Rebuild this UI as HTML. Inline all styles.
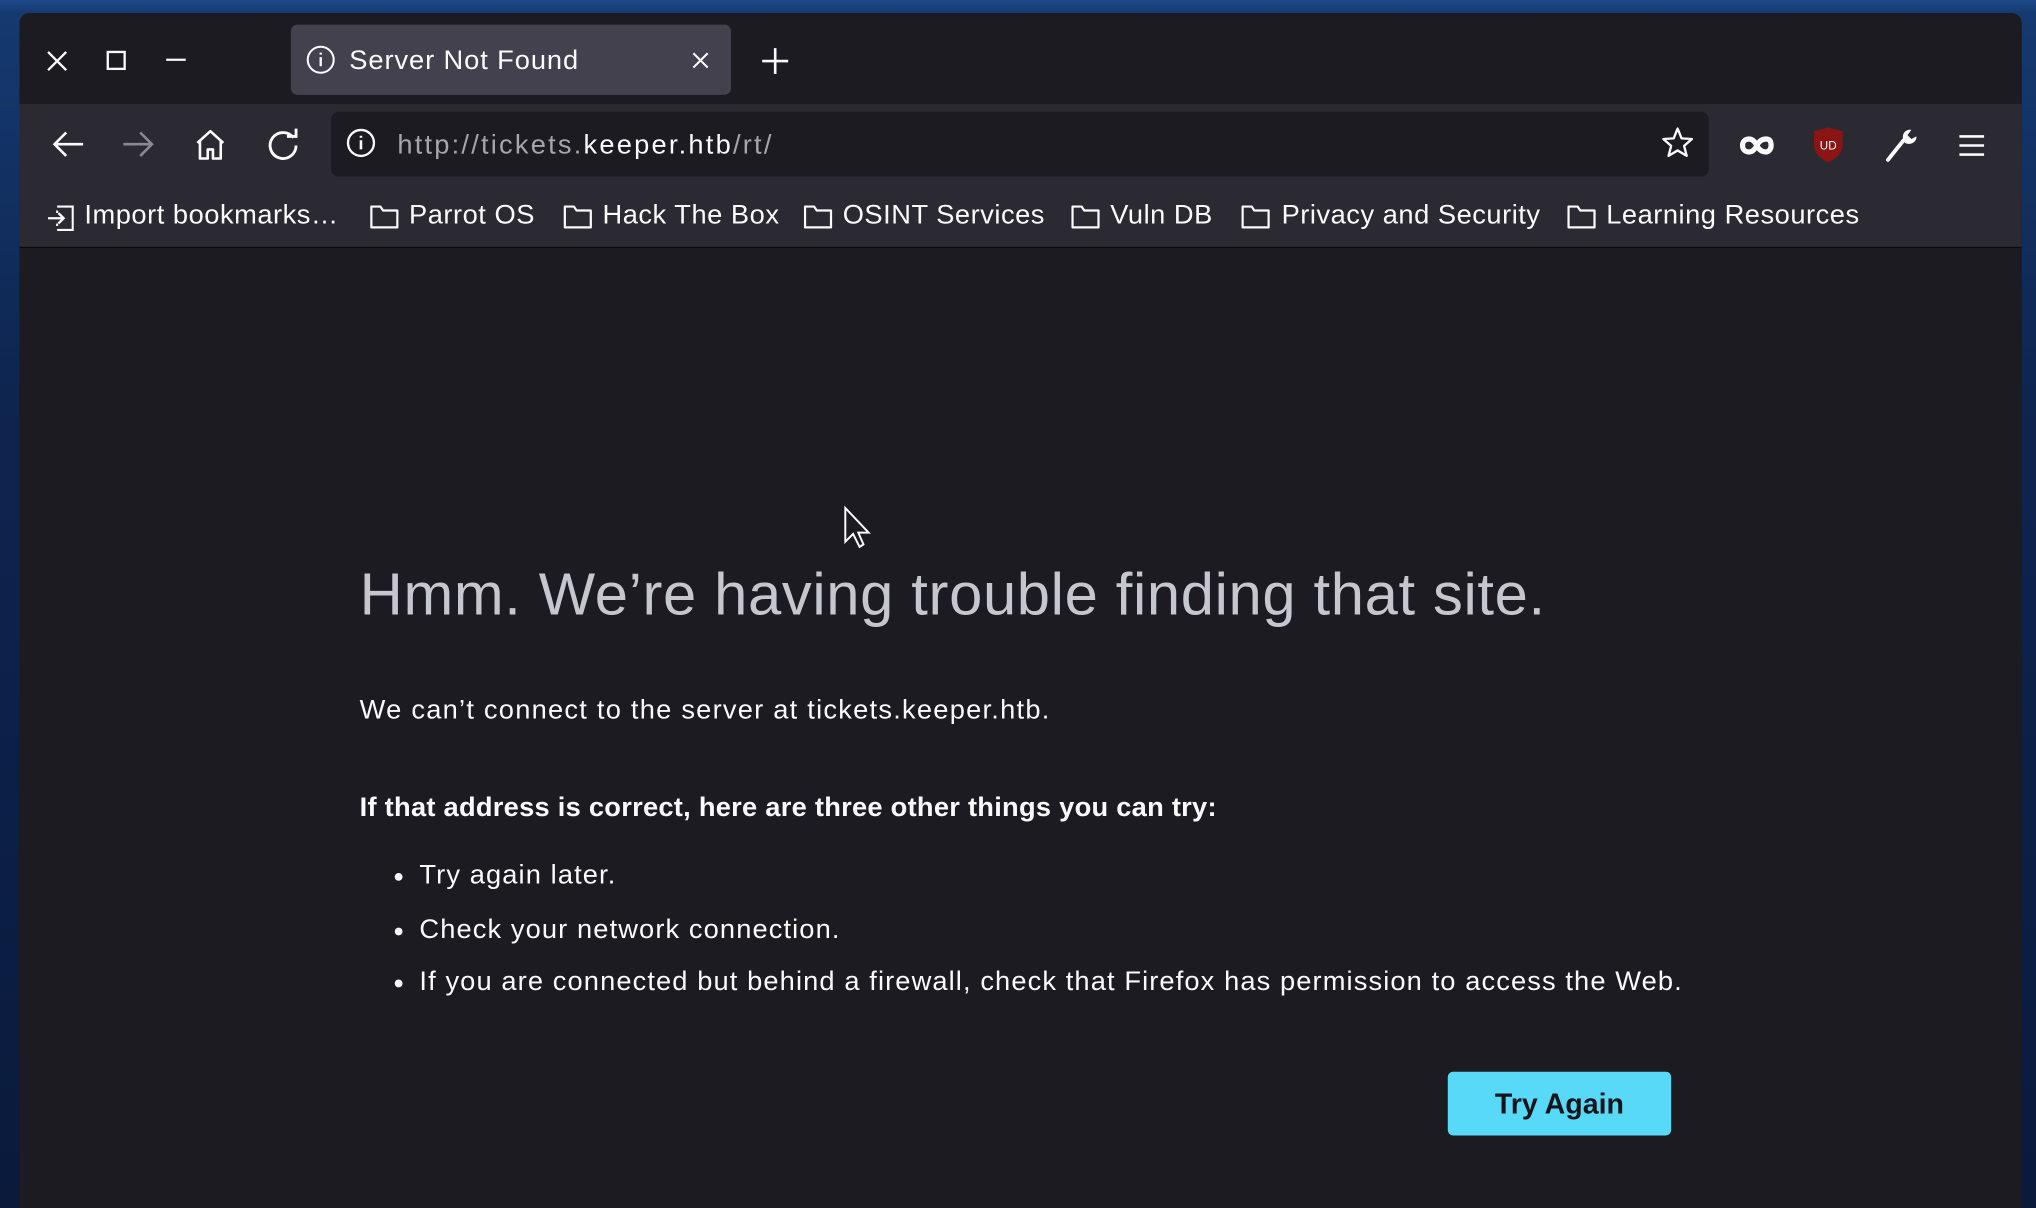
<!DOCTYPE html>
<html><head><meta charset="utf-8"><style>
html,body{margin:0;padding:0;width:2036px;height:1190px;overflow:hidden;background:#0b1a3a;}
#w{position:absolute;left:0;top:0;width:1568px;height:916px;transform:scale(1.29847,1.29913);transform-origin:0 0;
background:linear-gradient(180deg,#1d4a8a 0,#153a70 10px,#0e2550 300px,#0a1a3c 916px);font-family:"Liberation Sans",sans-serif;}
.win{position:absolute;left:15px;top:10px;width:1542px;height:920px;background:#1c1b22;border-radius:8px 8px 0 0;overflow:hidden;}
.tabs{position:absolute;left:0;top:0;width:100%;height:70px;background:#1c1b22;}
.tab{position:absolute;left:209px;top:9px;width:339px;height:54px;background:#42414d;border-radius:5px;}
.tab span{position:absolute;left:45px;top:16px;font-size:21px;color:#fbfbfe;letter-spacing:0.7px;}
.tb{position:absolute;left:0;top:70px;width:100%;height:110px;background:#2b2a33;border-bottom:1px solid #0c0c0f;}
.url{position:absolute;left:240px;top:6px;width:1061px;height:50px;background:#1c1b22;border-radius:6px;}
.url .t{position:absolute;left:51px;top:14px;font-size:21px;color:#a5a5ad;letter-spacing:1.7px;}
.url .t b{color:#fbfbfe;font-weight:normal;}
.bm{position:absolute;top:74px;font-size:21px;color:#fbfbfe;white-space:nowrap;letter-spacing:0.4px;}
svg{position:absolute;overflow:visible;}
.c{position:absolute;left:262px;color:#fbfbfe;}
h1{position:absolute;left:262px;top:420px;margin:0;font-size:46px;font-weight:300;color:#c6c6ce;letter-spacing:0.5px;white-space:nowrap;}
.p{font-size:21px;letter-spacing:0.85px;white-space:nowrap;}
.btn{position:absolute;left:1100px;top:815px;width:172px;height:49px;background:#57d9f7;border-radius:4px;color:#15141a;font-weight:bold;font-size:22px;text-align:center;line-height:49px;}
.dot{position:absolute;left:27px;top:10px;width:6px;height:6px;border-radius:3px;background:#fbfbfe;}
</style></head><body><div id="w">
<div class="win">
 <div class="tabs">
  <svg width="20" height="20" style="left:20px;top:28px"><path d="M2 2L16 16M16 2L2 16" stroke="#fbfbfe" stroke-width="1.8"/></svg>
  <svg width="20" height="20" style="left:67px;top:29px"><rect x="1" y="1" width="13" height="13" fill="none" stroke="#fbfbfe" stroke-width="1.8"/></svg>
  <svg width="20" height="20" style="left:112px;top:28px"><path d="M1 8H16" stroke="#fbfbfe" stroke-width="1.8"/></svg>
  <div class="tab">
   <svg width="24" height="24" style="left:12px;top:15px"><circle cx="11" cy="12" r="10" fill="none" stroke="#fbfbfe" stroke-width="1.6"/><path d="M11 10V17M11 6.5V8" stroke="#fbfbfe" stroke-width="1.8"/></svg>
   <span>Server Not Found</span>
   <svg width="16" height="16" style="left:309px;top:21px"><path d="M1 1L12 12M12 1L1 12" stroke="#fbfbfe" stroke-width="1.6"/></svg>
  </div>
  <svg width="22" height="22" style="left:572px;top:27px"><path d="M10 0V20M0 10H20" stroke="#fbfbfe" stroke-width="2"/></svg>
 </div>
 <div class="tb">
  <svg width="26" height="24" style="left:25px;top:20px"><path d="M24 11H2M11 2L2 11L11 20" fill="none" stroke="#fbfbfe" stroke-width="2"/></svg>
  <svg width="26" height="24" style="left:80px;top:20px"><path d="M0 11H22M13 2L22 11L13 20" fill="none" stroke="#8a8990" stroke-width="2"/></svg>
  <svg width="26" height="26" style="left:135px;top:19px"><path d="M2 11L12 2L22 11M4 9V23H10V16H14V23H20V9" fill="none" stroke="#fbfbfe" stroke-width="2" stroke-linejoin="round"/></svg>
  <svg width="26" height="26" style="left:191px;top:19px"><path d="M20 7A10 10 0 1 0 22 13" fill="none" stroke="#fbfbfe" stroke-width="2.2"/><path d="M15 6H22V0" fill="none" stroke="#fbfbfe" stroke-width="2.2"/></svg>
  <div class="url">
   <svg width="26" height="26" style="left:12px;top:12px"><circle cx="11" cy="12" r="10" fill="none" stroke="#fbfbfe" stroke-width="1.8"/><path d="M11 10V17M11 6.5V8" stroke="#fbfbfe" stroke-width="2"/></svg>
   <div class="t">http://tickets.<b>keeper.htb</b>/rt/</div>
   <svg width="26" height="26" style="left:1025px;top:12px"><path d="M12 1L15 8.5L23 9L17 14.3L19 22L12 17.8L5 22L7 14.3L1 9L9 8.5Z" fill="none" stroke="#fbfbfe" stroke-width="1.8" stroke-linejoin="round"/></svg>
  </div>
  <svg width="28" height="16" style="left:1325px;top:25px"><path d="M7 2C3 2 2 5 2 7C2 10 4 12 7 12C10 12 12 9 13 7C14 5 16 2 20 2C23 2 24 4 24 7C24 10 22 12 20 12C16 12 14 9 13 7C12 5 10 2 7 2Z" fill="none" stroke="#fbfbfe" stroke-width="4"/></svg>
  <svg width="26" height="30" style="left:1381px;top:17px"><path d="M12 1L23 4V15C23 21 17 26 12 28C7 26 1 21 1 15V4Z" fill="#8b1512"/><text x="12" y="18" font-size="9" fill="#fff" text-anchor="middle" font-family="Liberation Sans">UD</text></svg>
  <svg width="26" height="28" style="left:1437px;top:19px"><path d="M2 24L14 9" stroke="#fbfbfe" stroke-width="3" stroke-linecap="round"/><path d="M14 9C12 4 16 0 20 1L17 5L20 8L24 6C24 11 19 13 15 11" fill="#fbfbfe"/></svg>
  <svg width="22" height="20" style="left:1494px;top:23px"><path d="M0 2H19M0 9H19M0 16H19" stroke="#fbfbfe" stroke-width="2"/></svg>
  <svg width="24" height="22" style="left:21px;top:76px"><path d="M8 3H20V21H8M8 18V16M8 8V6" fill="none" stroke="#fbfbfe" stroke-width="1.6"/><path d="M1 12H13M9 8L13 12L9 16" fill="none" stroke="#fbfbfe" stroke-width="1.8"/></svg>
  <div class="bm" style="left:50px">Import bookmarks…</div>
  <svg width="24" height="22" style="left:270px;top:76px"><path d="M1 3H8L10 6H21V19H1Z" fill="none" stroke="#fbfbfe" stroke-width="1.7" stroke-linejoin="round"/></svg><div class="bm" style="left:300px">Parrot OS</div>
  <svg width="24" height="22" style="left:419px;top:76px"><path d="M1 3H8L10 6H21V19H1Z" fill="none" stroke="#fbfbfe" stroke-width="1.7" stroke-linejoin="round"/></svg><div class="bm" style="left:449px">Hack The Box</div>
  <svg width="24" height="22" style="left:604px;top:76px"><path d="M1 3H8L10 6H21V19H1Z" fill="none" stroke="#fbfbfe" stroke-width="1.7" stroke-linejoin="round"/></svg><div class="bm" style="left:634px">OSINT Services</div>
  <svg width="24" height="22" style="left:810px;top:76px"><path d="M1 3H8L10 6H21V19H1Z" fill="none" stroke="#fbfbfe" stroke-width="1.7" stroke-linejoin="round"/></svg><div class="bm" style="left:840px">Vuln DB</div>
  <svg width="24" height="22" style="left:941px;top:76px"><path d="M1 3H8L10 6H21V19H1Z" fill="none" stroke="#fbfbfe" stroke-width="1.7" stroke-linejoin="round"/></svg><div class="bm" style="left:972px">Privacy and Security</div>
  <svg width="24" height="22" style="left:1192px;top:76px"><path d="M1 3H8L10 6H21V19H1Z" fill="none" stroke="#fbfbfe" stroke-width="1.7" stroke-linejoin="round"/></svg><div class="bm" style="left:1222px">Learning Resources</div>
 </div>
 <h1>Hmm. We’re having trouble finding that site.</h1>
 <div class="c p" style="top:525px;letter-spacing:0.95px">We can’t connect to the server at tickets.keeper.htb.</div>
 <div class="c p" style="top:600px;font-weight:bold;letter-spacing:0.2px">If that address is correct, here are three other things you can try:</div>
 <div class="c p" style="top:652px"><i class="dot"></i><span style="margin-left:46px">Try again later.</span></div>
 <div class="c p" style="top:694px"><i class="dot"></i><span style="margin-left:46px">Check your network connection.</span></div>
 <div class="c p" style="top:734px"><i class="dot"></i><span style="margin-left:46px">If you are connected but behind a firewall, check that Firefox has permission to access the Web.</span></div>
 <div class="btn">Try Again</div>
 <svg width="24" height="34" style="left:635px;top:380px"><path d="M1 1V27L7 21L12 31L15 29L11 20H19Z" fill="#1c1b22" stroke="#fbfbfe" stroke-width="1.5"/></svg>
</div>
</div></body></html>
